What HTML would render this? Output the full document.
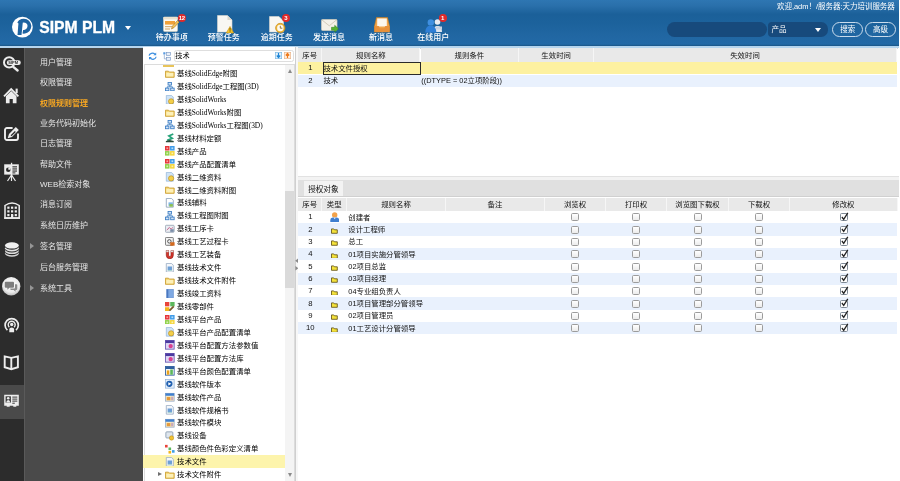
<!DOCTYPE html>
<html lang="zh-CN"><head><meta charset="utf-8"><title>SIPM PLM</title>
<style>
*{box-sizing:border-box;margin:0;padding:0}
html,body{width:900px;height:481px;overflow:hidden;background:#fff}
body{position:relative;font-family:"Liberation Sans","Noto Sans CJK SC",sans-serif;font-size:8px;color:#222;line-height:1}
.abs{position:absolute}
#hdr{left:0;top:0;width:898.600px;height:46.300px;background:linear-gradient(#2e76b2 0,#2a70ab 12%,#1b6099 31%,#1c629c 50%,#2167a3 80%,#2269a6 96%,#1a5585 100%)}
#hdrline{left:0;top:46.300px;width:898.600px;height:1.300px;background:#b5d5ee}
#logo{left:11px;top:16px;width:23px;height:23px}
#title{left:39.300px;top:19.600px;font-size:15.700px;font-weight:bold;color:#fff;-webkit-text-stroke:0.350px #fff;white-space:nowrap;transform-origin:0 0}
#caret{left:124.800px;top:25.800px;width:0;height:0;border-left:3.5px solid transparent;border-right:3.5px solid transparent;border-top:4px solid #fff}
.tb{position:absolute;top:33.5px;width:60px;margin-left:-30px;text-align:center;color:#fff;font-size:8px;font-weight:500;white-space:nowrap}
.tbi{position:absolute;top:13px;width:18px;height:18px;margin-left:-9px}
.badge{position:absolute;top:13.5px;width:8px;height:8px;border-radius:4px;background:#e02a2a;color:#fff;font-size:6px;line-height:8px;text-align:center;font-weight:bold;letter-spacing:-0.3px}
#welcome{right:5.200px;top:3.200px;color:#fff;font-size:7.480px;white-space:nowrap}
#search{left:666.700px;top:22.200px;width:100px;height:15.300px;border-radius:7.600px;background:#174a7c}
#sel{left:768px;top:22.200px;width:59.500px;height:15.300px;border-radius:4px 7px 7px 4px;background:#174a7c;color:#fff;font-size:7.600px;line-height:15.300px;padding-left:3.500px}
#selarrow{left:815.400px;top:27.600px;width:0;height:0;border-left:3.5px solid transparent;border-right:3.5px solid transparent;border-top:4px solid #fff}
.btn{position:absolute;top:22.200px;height:15.300px;border:0.800px solid #c9dbec;border-radius:7.600px;color:#fff;font-size:7.500px;line-height:13.700px;text-align:center}
#iconbar{left:0;top:47.600px;width:23.800px;height:434px;background:#2c2c2c}
#menu{left:23.800px;top:47.600px;width:119.400px;height:434px;background:#4a4a4a;border-left:1px solid #5a5a5a}
.mi{position:absolute;left:40px;color:#e6e6e6;font-size:8px;white-space:nowrap}
.mi.act{color:#f5a623;font-weight:bold}
.marr{position:absolute;left:29.800px;width:0;height:0;border-top:3px solid transparent;border-bottom:3px solid transparent;border-left:4.600px solid #969696}
.sb{position:absolute;left:2px;width:20px;height:20px}
#tree{left:143px;top:47px;width:152px;height:434px;background:#fff;overflow:hidden}
.tr{position:absolute;left:0;width:142.400px;height:13px;font-family:"Liberation Serif","Noto Sans CJK SC",serif;font-size:7.400px;line-height:13px;color:#000;white-space:nowrap}
.tr .ti{position:absolute;left:22.100px;top:1.900px}
.tr span{position:absolute;left:34px;top:0.300px}
.tr.sel{background:#fdf4ac}
#split{left:294.500px;top:47px;width:3px;height:434px;background:#f7f7f7;border-left:1px solid #cfcfcf}
.gh{position:absolute;height:13px;background:#e9e9e9;border-right:1px solid #f6f6f6;text-align:center;line-height:13px;font-size:7.400px;color:#111}
.gc{position:absolute;font-size:7.400px;white-space:nowrap;color:#111}
.gn{position:absolute;width:20.600px;text-align:center;font-size:7.700px;color:#111;white-space:nowrap}
.cb{position:absolute;width:8px;height:8px;border:0.900px solid #9c9c9c;border-radius:1.600px;background:linear-gradient(#fff,#ececec)}
#wrap{position:absolute;left:0;top:0;width:900px;height:481px;overflow:hidden;will-change:transform}
</style></head><body><div id="wrap">

<div id="hdr" class="abs"></div><div id="hdrline" class="abs"></div>
<svg id="logo" class="abs" viewBox="11 16 23 23"><circle cx="22.400" cy="27.100" r="10.400" fill="#fff"/><path d="M18.900 23.450a5.600 5.600 0 1 1 3.900 8.300" fill="none" stroke="#1f64a1" stroke-width="3.800"/><path d="M18.500 22.300h4.300l-1.300 12.800h-4z" fill="#1f64a1"/></svg>
<div id="title" class="abs">SIPM PLM</div><div id="caret" class="abs"></div>
<svg class="abs" style="left:163px;top:16px" width="16" height="16" viewBox="0 0 16 16"><rect x="0.5" y="1" width="14" height="14.5" rx="1" fill="#fcfaf3" stroke="#d8d2c0" stroke-width=".6"/><rect x="0.5" y="1" width="14" height="2.4" fill="#e9e2cf"/><rect x="2" y="5" width="10" height="3.6" fill="#f0a23a"/><rect x="2" y="10" width="7" height="1.2" fill="#d8b27a"/><rect x="2" y="12.4" width="5" height="1.2" fill="#d8b27a"/><path d="M8.5 13l1-3 5-5.5 1.6 1.6-5 5.4z" fill="#f6c55a" stroke="#a8741c" stroke-width=".6"/></svg>
<div class="tb" style="left:171.7px">待办事项</div>
<div class="badge" style="left:177.7px">12</div>
<svg class="abs" style="left:217px;top:14.5px" width="18" height="19" viewBox="0 0 18 19"><path d="M0.5 0.5h10l4.5 4.5v12h-14.5z" fill="#f8f7f3" stroke="#dcd9d0" stroke-width=".6"/><path d="M10.5 0.5v4.5h4.5z" fill="#dcd8cd"/><path d="M13 11.500l3.700 6.500h-7.400z" fill="#f6c62c" stroke="#c9951a" stroke-width=".7"/><rect x="12.600" y="13" width=".9" height="2.800" fill="#6b4e00"/><rect x="12.600" y="16.300" width=".9" height=".9" fill="#6b4e00"/></svg>
<div class="tb" style="left:223.7px">预警任务</div>
<svg class="abs" style="left:269px;top:15.5px" width="18" height="18" viewBox="0 0 18 18"><path d="M0.500 0.500h9.500l4.500 4.500v11h-14z" fill="#f8f7f3" stroke="#dcd9d0" stroke-width=".6"/><circle cx="11.300" cy="12" r="4.700" fill="#f1b93a" stroke="#c58a1a" stroke-width=".7"/><circle cx="11.300" cy="12" r="3.200" fill="#fdfaf0"/><path d="M11.300 9.800v2.400h2" stroke="#7a5a1a" stroke-width=".8" fill="none"/></svg>
<div class="tb" style="left:276.7px">逾期任务</div>
<div class="badge" style="left:281.8px">3</div>
<svg class="abs" style="left:320.500px;top:18.500px" width="18" height="14" viewBox="0 0 18 14"><rect x="0.500" y="0.500" width="15.500" height="11" rx="1" fill="#f4f1e8" stroke="#d3cdbd" stroke-width=".7"/><path d="M0.800 0.800l7.450 6 7.450-6" fill="none" stroke="#c9c2ae" stroke-width=".8"/><path d="M10.500 8.300h3.200v-2l3.800 3.500-3.800 3.500v-2h-3.200z" fill="#55b332" stroke="#2f7d1c" stroke-width=".5"/></svg>
<div class="tb" style="left:329px">发送消息</div>
<svg class="abs" style="left:373.500px;top:16.500px" width="16" height="16" viewBox="0 0 16 16"><path d="M2.500 0.500h11l2 8.500v6h-15v-6z" fill="#f1a54a" stroke="#c77d22" stroke-width=".6"/><rect x="3.200" y="1.500" width="9.600" height="8" fill="#fbf7ee"/><path d="M0.500 9h4.200l1 2.200h4.600l1-2.200h4.200v6h-15z" fill="#e8913a"/></svg>
<div class="tb" style="left:381px">新消息</div>
<svg class="abs" style="left:425px;top:17.500px" width="18" height="15" viewBox="0 0 18 15"><circle cx="12.500" cy="4" r="2.800" fill="#e9ecf2"/><path d="M8 14c0-4.500 2-6 4.500-6s4.500 1.500 4.500 6z" fill="#dfe5ee"/><rect x="11" y="8.500" width="6" height="3" fill="#c9d3e2"/><circle cx="5.800" cy="4.400" r="3.200" fill="#3f8fe0"/><path d="M0.300 14.500c0-5 2.300-6.800 5.500-6.800s5.500 1.800 5.500 6.800z" fill="#2f7fd6"/></svg>
<div class="tb" style="left:433.2px">在线用户</div>
<div class="badge" style="left:438.5px">1</div>
<div id="welcome" class="abs">欢迎,adm！/服务器:天力培训服务器</div>
<div id="search" class="abs"></div><div id="sel" class="abs">产品</div><div id="selarrow" class="abs"></div>
<div class="btn" style="left:832px;width:31.300px">搜索</div><div class="btn" style="left:865.300px;width:30.500px">高级</div>
<div id="iconbar" class="abs"></div><div id="menu" class="abs"></div>
<div class="mi" style="top:59.0px">用户管理</div>
<div class="mi" style="top:79.1px">权限管理</div>
<div class="mi act" style="top:99.7px">权限规则管理</div>
<div class="mi" style="top:119.8px">业务代码初始化</div>
<div class="mi" style="top:140.2px">日志管理</div>
<div class="mi" style="top:160.6px">帮助文件</div>
<div class="mi" style="top:181.0px">WEB检索对象</div>
<div class="mi" style="top:201.3px">消息订阅</div>
<div class="mi" style="top:222.3px">系统日历维护</div>
<div class="mi" style="top:243.1px">签名管理</div>
<div class="marr" style="top:243.2px"></div>
<div class="mi" style="top:263.6px">后台服务管理</div>
<div class="mi" style="top:284.8px">系统工具</div>
<div class="marr" style="top:284.9px"></div>
<svg class="abs" style="left:2px;top:55px" width="22" height="18" viewBox="2 55 22 18"><circle cx="9.2" cy="62.4" r="5.2" fill="none" stroke="#ededed" stroke-width="2"/><path d="M13.3 66.8l4.300 3.700" stroke="#ededed" stroke-width="2.400" stroke-linecap="round"/><rect x="6.800" y="60.300" width="14" height="4.700" rx="2.350" fill="#ededed"/><text x="8.300" y="64.200" font-family="Liberation Sans,sans-serif" font-size="4" font-weight="bold" fill="#2c2c2c">SIPM</text></svg>
<svg class="abs" style="left:3px;top:87px" width="17" height="17" viewBox="3 87 17 17"><path d="M4 96.300l7.200-7.300 7.200 7.300" fill="none" stroke="#ededed" stroke-width="1.800" stroke-linejoin="miter"/><path d="M5.900 96.200l5.300-5.300 5.300 5.300v7h-3.700v-4.200h-3.200v4.200h-3.700z" fill="#ededed"/><rect x="15.600" y="88.600" width="2.100" height="4.500" fill="#ededed"/></svg>
<svg class="abs" style="left:3px;top:125px" width="18" height="18" viewBox="3 125 18 18"><path d="M12.600 128h-5.700a1.900 1.900 0 0 0-1.900 1.900v8.200a1.900 1.900 0 0 0 1.900 1.900h9.200a1.900 1.900 0 0 0 1.900-1.900v-4.600" fill="none" stroke="#ededed" stroke-width="1.900"/><path d="M7.700 138.200l1.300-4.300 6.800-6.800 3 3-6.800 6.800z" fill="#ededed"/><path d="M10.600 135.300l4.300-4.300.9.900-4.300 4.300z" fill="#2c2c2c"/></svg>
<svg class="abs" style="left:3px;top:162px" width="18" height="20" viewBox="3 162 18 20"><rect x="10.900" y="162.800" width="1.300" height="14" fill="#ededed"/><rect x="4.200" y="164.300" width="14.600" height="10.300" fill="#ededed"/><path d="M11.500 175l-4 6M11.500 175l4 6M11.500 175v6" stroke="#ededed" stroke-width="1.200"/><circle cx="8.300" cy="169.700" r="2.300" fill="#2c2c2c"/><path d="M8.300 169.700v-2.300a2.300 2.300 0 0 1 2.300 2.300z" fill="#ededed"/><rect x="12.400" y="166.300" width="4.600" height="1.100" fill="#2c2c2c"/><rect x="12.400" y="168.400" width="4.600" height="1.100" fill="#2c2c2c"/><rect x="12.400" y="170.500" width="4.600" height="1.100" fill="#2c2c2c"/><rect x="12.400" y="172.400" width="3" height="1" fill="#2c2c2c"/></svg>
<svg class="abs" style="left:3px;top:201px" width="19" height="19" viewBox="3 201 19 19"><path d="M5 218v-12.500q7-5.200 14.200 0v12.500z" fill="none" stroke="#ededed" stroke-width="1.500"/><rect x="4.200" y="217.300" width="15.800" height="1.600" fill="#ededed"/><rect x="7.3" y="206.6" width="2.200" height="2.200" fill="#ededed"/><rect x="11.0" y="206.6" width="2.200" height="2.200" fill="#ededed"/><rect x="14.7" y="206.6" width="2.200" height="2.200" fill="#ededed"/><rect x="7.3" y="210.3" width="2.200" height="2.200" fill="#ededed"/><rect x="11.0" y="210.3" width="2.200" height="2.200" fill="#ededed"/><rect x="14.7" y="210.3" width="2.200" height="2.200" fill="#ededed"/><rect x="7.3" y="214.0" width="2.200" height="2.200" fill="#ededed"/><rect x="11.0" y="214.0" width="2.200" height="2.200" fill="#ededed"/><rect x="14.7" y="214.0" width="2.200" height="2.200" fill="#ededed"/><rect x="11" y="215" width="2.200" height="3" fill="#ededed"/></svg>
<svg class="abs" style="left:4px;top:241px" width="16" height="17" viewBox="4 241 16 17"><ellipse cx="11.900" cy="253.600" rx="6.900" ry="3.200" fill="#d8d8d8"/><ellipse cx="11.900" cy="252" rx="6.900" ry="3.200" fill="#2c2c2c"/><ellipse cx="11.900" cy="250.900" rx="6.900" ry="3.200" fill="#dcdcdc"/><ellipse cx="11.900" cy="249.300" rx="6.900" ry="3.200" fill="#2c2c2c"/><ellipse cx="11.900" cy="248.200" rx="6.900" ry="3.200" fill="#e2e2e2"/><ellipse cx="11.900" cy="246.600" rx="6.900" ry="3.200" fill="#2c2c2c"/><ellipse cx="11.900" cy="245.400" rx="6.900" ry="3.200" fill="#f0f0f0"/></svg>
<svg class="abs" style="left:1px;top:276px" width="21" height="21" viewBox="1 276 21 21"><defs><radialGradient id="cg" cx="50%" cy="40%" r="60%"><stop offset="0" stop-color="#fff"/><stop offset=".7" stop-color="#ececec"/><stop offset="1" stop-color="#bdbdbd"/></radialGradient></defs><circle cx="11.200" cy="286.300" r="9.200" fill="url(#cg)"/><path d="M5.800 281.800h7.200a1 1 0 0 1 1 1v4a1 1 0 0 1-1 1h-3.600l-2 2v-2h-1.600a1 1 0 0 1-1-1v-4a1 1 0 0 1 1-1z" fill="#7d7d7d"/><path d="M15 284.300h1.500a.8.800 0 0 1 .8.800v4a.8.800 0 0 1-.8.800h-.9v1.900l-2-1.900h-2.600a.8.800 0 0 1-.8-.8v-.5h3.600a1.200 1.200 0 0 0 1.200-1.200z" fill="#8a8a8a"/></svg>
<svg class="abs" style="left:3px;top:316px" width="18" height="18" viewBox="3 316 18 18"><path d="M7.400 330.200a6.600 6.600 0 1 1 8.600 0" fill="none" stroke="#ededed" stroke-width="1.700"/><path d="M9.300 327.300a3.500 3.500 0 1 1 4.800 0" fill="none" stroke="#ededed" stroke-width="1.400"/><circle cx="11.700" cy="324.500" r="1.700" fill="#ededed"/><path d="M9.300 332.300v-3.200q0-1.500 2.400-1.500t2.400 1.500v3.200z" fill="#ededed"/></svg>
<svg class="abs" style="left:3px;top:354px" width="17" height="18" viewBox="3 354 17 18"><path d="M4.700 356.400l6.600 1.500 6.600-1.500v10.800l-6.600 2-6.600-2z" fill="none" stroke="#ededed" stroke-width="1.900" stroke-linejoin="miter"/><path d="M11.300 357.800v11.600" stroke="#ededed" stroke-width="1.900"/></svg>
<div class="abs" style="left:0;top:385px;width:24px;height:34px;background:#4a4a4a"></div><svg class="abs" style="left:3px;top:393px" width="17" height="15" viewBox="3 393 17 15"><path d="M4.200 394.700h14.600v11h-2.500v1h-3v-1h-3.600v1h-3v-1h-2.500z" fill="#ededed"/><rect x="5.600" y="396.300" width="5.300" height="6.300" fill="#3a3a3a"/><circle cx="8.250" cy="398.300" r="1.300" fill="#ededed"/><path d="M6.300 402.600q0-2.600 1.950-2.600t1.950 2.600z" fill="#ededed"/><rect x="12.300" y="396.600" width="5" height="1" fill="#3a3a3a"/><rect x="12.300" y="398.600" width="5" height="1" fill="#3a3a3a"/><rect x="12.300" y="400.600" width="5" height="1" fill="#3a3a3a"/><rect x="12.300" y="402.700" width="2.500" height="1" fill="#3a3a3a"/></svg>
<div id="tree" class="abs">
<svg class="abs" style="left:4.600px;top:4.800px" width="9.200" height="8.400" viewBox="0 0 11 10"><path d="M1.300 4.300a4 3.300 0 0 1 7-1.800" fill="none" stroke="#3d8fe0" stroke-width="1.500"/><path d="M9.800 0.600v3.400h-3.400z" fill="#3d8fe0"/><path d="M9.700 5.700a4 3.300 0 0 1-7 1.800" fill="none" stroke="#3d8fe0" stroke-width="1.500"/><path d="M1.200 9.400v-3.400h3.400z" fill="#3d8fe0"/></svg>
<svg class="abs" style="left:19.600px;top:4.600px" width="8.400" height="9.200" viewBox="0 0 10 11"><rect x="0.300" y="0.300" width="2.600" height="2.600" fill="#5a9be0"/><rect x="4.200" y="0.800" width="4.800" height="3.200" fill="#e8eef7" stroke="#6d8fc0" stroke-width=".7"/><rect x="4.200" y="6.300" width="4.800" height="3.600" fill="#e8eef7" stroke="#6d8fc0" stroke-width=".7"/><path d="M1.600 3v5.200h2.600M1.600 5h0" stroke="#6d8fc0" stroke-width=".7" fill="none"/></svg>
<div class="abs" style="left:30.500px;top:3.200px;width:120px;height:11.600px;border:1px solid #dedede;border-radius:2.500px;background:#fff"></div>
<div class="abs" style="left:32.200px;top:5.600px;font-family:'Liberation Serif','Noto Sans CJK SC',serif;font-size:7.200px;color:#000">技术</div>
<svg class="abs" style="left:132.400px;top:5.300px" width="7" height="7" viewBox="0 0 7 7"><rect x="0.350" y="0.350" width="6.300" height="6.300" fill="#e4f1fb" stroke="#7db9e6" stroke-width=".7"/><path d="M3.500 1v4M1.800 3.500l1.700 2 1.700-2" stroke="#1f86d6" stroke-width="1.200" fill="none"/></svg>
<svg class="abs" style="left:141.300px;top:5.300px" width="7" height="7" viewBox="0 0 7 7"><rect x="0.350" y="0.350" width="6.300" height="6.300" fill="#fdeee0" stroke="#eab58a" stroke-width=".7"/><path d="M3.500 6v-4M1.800 3.500l1.700-2 1.700 2" stroke="#ee7a1c" stroke-width="1.200" fill="none"/></svg>
<div class="abs" style="left:1px;top:17px;width:150.500px;height:420px;border:1px solid #dcdcdc;border-bottom:none"></div>
<div class="abs" style="left:20px;top:18px;width:11px;height:1.500px;background:#e8c45a"></div>
<div class="tr" style="top:19.80px"><svg class="ti" width="9.600" height="9.600" viewBox="0 0 11 11"><path d="M0.5 2.5h3.5l1 1h5.5v6h-10z" fill="#f6d777" stroke="#c99a2a" stroke-width="1"/><rect x="1.5" y="4.5" width="8" height="4" fill="#fdf0b8"/></svg><span>基线SolidEdge附图</span></div>
<div class="tr" style="top:32.74px"><svg class="ti" width="9.600" height="9.600" viewBox="0 0 11 11"><rect x="3.5" y="0.5" width="4" height="3" fill="#cfe3f8" stroke="#3f7fc4"/><rect x="0.5" y="7" width="4" height="3" fill="#cfe3f8" stroke="#3f7fc4"/><rect x="6.5" y="7" width="4" height="3" fill="#cfe3f8" stroke="#3f7fc4"/><path d="M5.5 3.5v2M2.5 7v-1.5h6V7" stroke="#3f7fc4" fill="none"/></svg><span>基线SolidEdge工程图(3D)</span></div>
<div class="tr" style="top:45.68px"><svg class="ti" width="9.600" height="9.600" viewBox="0 0 11 11"><path d="M1.500 0.500h6l2 2v8h-8z" fill="#cfe3f6" stroke="#8fb2d8" stroke-width=".8"/><circle cx="7" cy="7.300" r="3" fill="#f3cf4a" stroke="#b7891b" stroke-width=".7"/></svg><span>基线SolidWorks</span></div>
<div class="tr" style="top:58.62px"><svg class="ti" width="9.600" height="9.600" viewBox="0 0 11 11"><path d="M0.5 2.5h3.5l1 1h5.5v6h-10z" fill="#f6d777" stroke="#c99a2a" stroke-width="1"/><rect x="1.5" y="4.5" width="8" height="4" fill="#fdf0b8"/></svg><span>基线SolidWorks附图</span></div>
<div class="tr" style="top:71.56px"><svg class="ti" width="9.600" height="9.600" viewBox="0 0 11 11"><rect x="3.5" y="0.5" width="4" height="3" fill="#cfe3f8" stroke="#3f7fc4"/><rect x="0.5" y="7" width="4" height="3" fill="#cfe3f8" stroke="#3f7fc4"/><rect x="6.5" y="7" width="4" height="3" fill="#cfe3f8" stroke="#3f7fc4"/><path d="M5.5 3.5v2M2.5 7v-1.5h6V7" stroke="#3f7fc4" fill="none"/></svg><span>基线SolidWorks工程图(3D)</span></div>
<div class="tr" style="top:84.50px"><svg class="ti" width="9.600" height="9.600" viewBox="0 0 11 11"><path d="M9.500 1.200l-5 2.200 3.800 2.600-5.800 2.500" stroke="#27a37a" stroke-width="2" fill="none"/><path d="M1 9.300l4.500-1.200 4.500 1.200v1.200h-9z" fill="#2b4a3a"/></svg><span>基线材料定额</span></div>
<div class="tr" style="top:97.44px"><svg class="ti" width="9.600" height="9.600" viewBox="0 0 11 11"><rect x="0" y="0" width="5.200" height="5.200" fill="#e5353a"/><rect x="5.800" y="0" width="5.200" height="5.200" fill="#3f9be8"/><rect x="0" y="5.800" width="5.200" height="5.200" fill="#8fd14a"/><rect x="5.800" y="5.800" width="5.200" height="5.200" fill="#f5d63a"/><rect x="1.600" y="1.600" width="2" height="2" fill="#f7a0a0"/><rect x="7.400" y="1.600" width="2" height="2" fill="#b5dcf8"/><rect x="1.600" y="7.400" width="2" height="2" fill="#d5efb0"/><rect x="7.400" y="7.400" width="2" height="2" fill="#fbf0b0"/></svg><span>基线产品</span></div>
<div class="tr" style="top:110.38px"><svg class="ti" width="9.600" height="9.600" viewBox="0 0 11 11"><rect x="0" y="0" width="5.200" height="5.200" fill="#e5353a"/><rect x="5.800" y="0" width="5.200" height="5.200" fill="#3f9be8"/><rect x="0" y="5.800" width="5.200" height="5.200" fill="#8fd14a"/><rect x="5.800" y="5.800" width="5.200" height="5.200" fill="#f5d63a"/><rect x="1.600" y="1.600" width="2" height="2" fill="#f7a0a0"/><rect x="7.400" y="1.600" width="2" height="2" fill="#b5dcf8"/><rect x="1.600" y="7.400" width="2" height="2" fill="#d5efb0"/><rect x="7.400" y="7.400" width="2" height="2" fill="#fbf0b0"/></svg><span>基线产品配置清单</span></div>
<div class="tr" style="top:123.32px"><svg class="ti" width="9.600" height="9.600" viewBox="0 0 11 11"><path d="M1.500 0.500h6l2 2v8h-8z" fill="#cfe3f6" stroke="#8fb2d8" stroke-width=".8"/><circle cx="7" cy="7.300" r="3" fill="#f3cf4a" stroke="#b7891b" stroke-width=".7"/></svg><span>基线二维资料</span></div>
<div class="tr" style="top:136.26px"><svg class="ti" width="9.600" height="9.600" viewBox="0 0 11 11"><path d="M0.5 2.5h3.5l1 1h5.5v6h-10z" fill="#f6d777" stroke="#c99a2a" stroke-width="1"/><rect x="1.5" y="4.5" width="8" height="4" fill="#fdf0b8"/></svg><span>基线二维资料附图</span></div>
<div class="tr" style="top:149.20px"><svg class="ti" width="9.600" height="9.600" viewBox="0 0 11 11"><path d="M1.5 0.5h6l2 2v8h-8z" fill="#fff" stroke="#8fa3bb"/><rect x="4" y="5" width="5" height="4" fill="#7fb6e8"/><rect x="5" y="7" width="4" height="3" fill="#8cc152"/></svg><span>基线辅料</span></div>
<div class="tr" style="top:162.14px"><svg class="ti" width="9.600" height="9.600" viewBox="0 0 11 11"><rect x="3.5" y="0.5" width="4" height="3" fill="#cfe3f8" stroke="#3f7fc4"/><rect x="0.5" y="7" width="4" height="3" fill="#cfe3f8" stroke="#3f7fc4"/><rect x="6.5" y="7" width="4" height="3" fill="#cfe3f8" stroke="#3f7fc4"/><path d="M5.5 3.5v2M2.5 7v-1.5h6V7" stroke="#3f7fc4" fill="none"/></svg><span>基线工程图附图</span></div>
<div class="tr" style="top:175.08px"><svg class="ti" width="9.600" height="9.600" viewBox="0 0 11 11"><rect x="0.5" y="1.5" width="10" height="8" rx="1" fill="#e9edf2" stroke="#9aa7b5"/><path d="M2 7l3-3 2 2 2-2" stroke="#c24d7a" fill="none"/><rect x="6" y="6" width="4" height="3" fill="#7a8ea8"/></svg><span>基线工序卡</span></div>
<div class="tr" style="top:188.02px"><svg class="ti" width="9.600" height="9.600" viewBox="0 0 11 11"><rect x="0.5" y="0.5" width="9" height="9" rx="1" fill="#f2f2f2" stroke="#666"/><circle cx="5" cy="5" r="2" fill="none" stroke="#444"/><rect x="6" y="6" width="5" height="4" fill="#d46a1f"/></svg><span>基线工艺过程卡</span></div>
<div class="tr" style="top:200.96px"><svg class="ti" width="9.600" height="9.600" viewBox="0 0 11 11"><path d="M1.5 0.5v5.5a4 4 0 0 0 8 0V0.5h-2.6v5.5a1.4 1.4 0 0 1-2.8 0V0.5z" fill="#d8352b" stroke="#8f1d16" stroke-width=".8"/><rect x="1.5" y="0.5" width="2.6" height="2" fill="#ddd"/><rect x="6.9" y="0.5" width="2.6" height="2" fill="#ddd"/></svg><span>基线工艺装备</span></div>
<div class="tr" style="top:213.90px"><svg class="ti" width="9.600" height="9.600" viewBox="0 0 11 11"><path d="M1.5 0.5h6l2 2v8h-8z" fill="#f4f7fb" stroke="#9fb0c6"/><rect x="3" y="4" width="5" height="4" fill="#6d9fd6"/><rect x="3" y="8" width="5" height="1" fill="#9cc"/></svg><span>基线技术文件</span></div>
<div class="tr" style="top:226.84px"><svg class="ti" width="9.600" height="9.600" viewBox="0 0 11 11"><path d="M0.5 2.5h3.5l1 1h5.5v6h-10z" fill="#f6d777" stroke="#c99a2a" stroke-width="1"/><rect x="1.5" y="4.5" width="8" height="4" fill="#fdf0b8"/></svg><span>基线技术文件附件</span></div>
<div class="tr" style="top:239.78px"><svg class="ti" width="9.600" height="9.600" viewBox="0 0 11 11"><rect x="2" y="0.500" width="7.500" height="10" fill="#7fa9e3" stroke="#5a86c8" stroke-width=".7"/><rect x="2" y="0.500" width="1.800" height="10" fill="#4a78c0"/></svg><span>基线竣工资料</span></div>
<div class="tr" style="top:252.72px"><svg class="ti" width="9.600" height="9.600" viewBox="0 0 11 11"><rect x="0" y="0" width="5" height="5" fill="#e8443a"/><rect x="6" y="0" width="5" height="5" fill="#5cb85c"/><rect x="0" y="6" width="5" height="5" fill="#f3b51c"/><path d="M5 10l5-5" stroke="#7a5a2a" stroke-width="2"/></svg><span>基线零部件</span></div>
<div class="tr" style="top:265.66px"><svg class="ti" width="9.600" height="9.600" viewBox="0 0 11 11"><rect x="0" y="0" width="5.200" height="5.200" fill="#e5353a"/><rect x="5.800" y="0" width="5.200" height="5.200" fill="#3f9be8"/><rect x="0" y="5.800" width="5.200" height="5.200" fill="#8fd14a"/><rect x="5.800" y="5.800" width="5.200" height="5.200" fill="#f5d63a"/><rect x="1.600" y="1.600" width="2" height="2" fill="#f7a0a0"/><rect x="7.400" y="1.600" width="2" height="2" fill="#b5dcf8"/><rect x="1.600" y="7.400" width="2" height="2" fill="#d5efb0"/><rect x="7.400" y="7.400" width="2" height="2" fill="#fbf0b0"/></svg><span>基线平台产品</span></div>
<div class="tr" style="top:278.60px"><svg class="ti" width="9.600" height="9.600" viewBox="0 0 11 11"><path d="M1.500 0.500h6l2 2v8h-8z" fill="#cfe3f6" stroke="#8fb2d8" stroke-width=".8"/><circle cx="7" cy="7.300" r="3" fill="#f3cf4a" stroke="#b7891b" stroke-width=".7"/></svg><span>基线平台产品配置清单</span></div>
<div class="tr" style="top:291.54px"><svg class="ti" width="9.600" height="9.600" viewBox="0 0 11 11"><rect x="0.500" y="0.500" width="10" height="10" fill="#ddd6f3" stroke="#6a58b5"/><rect x="0.500" y="0.500" width="10" height="3" fill="#4a3aa0"/><circle cx="6.500" cy="7" r="2.500" fill="#d9408f"/></svg><span>基线平台配置方法参数值</span></div>
<div class="tr" style="top:304.48px"><svg class="ti" width="9.600" height="9.600" viewBox="0 0 11 11"><rect x="0.500" y="0.500" width="10" height="10" fill="#ddd6f3" stroke="#6a58b5"/><rect x="0.500" y="0.500" width="10" height="3" fill="#4a3aa0"/><circle cx="6.500" cy="7" r="2.500" fill="#d9408f"/></svg><span>基线平台配置方法库</span></div>
<div class="tr" style="top:317.42px"><svg class="ti" width="9.600" height="9.600" viewBox="0 0 11 11"><rect x="0.5" y="0.5" width="10" height="10" fill="#fff" stroke="#2f5f9f"/><rect x="0.5" y="0.5" width="10" height="3" fill="#2f5f9f"/><rect x="2" y="5" width="3" height="5" fill="#e8a21c"/><rect x="6" y="4" width="3" height="6" fill="#5cb85c"/></svg><span>基线平台颜色配置清单</span></div>
<div class="tr" style="top:330.36px"><svg class="ti" width="9.600" height="9.600" viewBox="0 0 11 11"><rect x="0.500" y="0.500" width="10" height="10" fill="#e3eefa" stroke="#8fb0d8" stroke-width=".8"/><circle cx="5" cy="5.500" r="3.600" fill="#1f5fb0"/><path d="M3.800 3.600l3.400 1.900-3.400 1.900z" fill="#fff"/></svg><span>基线软件版本</span></div>
<div class="tr" style="top:343.30px"><svg class="ti" width="9.600" height="9.600" viewBox="0 0 11 11"><rect x="0.500" y="1.500" width="10" height="9" fill="#f3e7c4" stroke="#8aa3c4" stroke-width=".8"/><rect x="0.500" y="1.500" width="10" height="2.800" fill="#3f7fd0"/><rect x="2" y="5.800" width="4.200" height="3.600" fill="#e59a3a"/><rect x="7" y="5.500" width="2.500" height="4" fill="#c9a8b8"/></svg><span>基线软件产品</span></div>
<div class="tr" style="top:356.24px"><svg class="ti" width="9.600" height="9.600" viewBox="0 0 11 11"><path d="M1.5 0.5h6l2 2v8h-8z" fill="#f4f7fb" stroke="#9fb0c6"/><rect x="3" y="4" width="5" height="4" fill="#6d9fd6"/><rect x="3" y="8" width="5" height="1" fill="#9cc"/></svg><span>基线软件规格书</span></div>
<div class="tr" style="top:369.18px"><svg class="ti" width="9.600" height="9.600" viewBox="0 0 11 11"><rect x="0.500" y="1.500" width="10" height="9" fill="#f3e7c4" stroke="#8aa3c4" stroke-width=".8"/><rect x="0.500" y="1.500" width="10" height="2.800" fill="#3f7fd0"/><rect x="2" y="5.800" width="4.200" height="3.600" fill="#e59a3a"/><rect x="7" y="5.500" width="2.500" height="4" fill="#c9a8b8"/></svg><span>基线软件模块</span></div>
<div class="tr" style="top:382.12px"><svg class="ti" width="9.600" height="9.600" viewBox="0 0 11 11"><rect x="1" y="1" width="8" height="7" rx="1" fill="#dfe6ee" stroke="#8a9bb0"/><circle cx="7.5" cy="8" r="2.5" fill="#f1c232" stroke="#b7891b" stroke-width=".6"/></svg><span>基线设备</span></div>
<div class="tr" style="top:395.06px"><svg class="ti" width="9.600" height="9.600" viewBox="0 0 11 11"><rect x="0" y="1" width="3" height="3" fill="#e8443a"/><rect x="4" y="4" width="3" height="3" fill="#5cb85c"/><rect x="8" y="7" width="3" height="3" fill="#3fa0e6"/><rect x="4" y="8" width="3" height="3" fill="#f3b51c"/></svg><span>基线颜色件色彩定义清单</span></div>
<div class="tr sel" style="top:408.00px"><svg class="ti" width="9.600" height="9.600" viewBox="0 0 11 11"><path d="M1.5 0.5h6l2 2v8h-8z" fill="#f4f7fb" stroke="#9fb0c6"/><rect x="3" y="4" width="5" height="4" fill="#6d9fd6"/><rect x="3" y="8" width="5" height="1" fill="#9cc"/></svg><span>技术文件</span></div>
<div class="tr" style="top:420.94px"><svg class="ti" width="9.600" height="9.600" viewBox="0 0 11 11"><path d="M0.5 2.5h3.5l1 1h5.5v6h-10z" fill="#f6d777" stroke="#c99a2a" stroke-width="1"/><rect x="1.5" y="4.5" width="8" height="4" fill="#fdf0b8"/></svg><span>技术文件附件</span></div>
<div class="abs" style="left:14.600px;top:424.600px;width:0;height:0;border-top:2.900px solid transparent;border-bottom:2.900px solid transparent;border-left:4.500px solid #707070"></div>
<div class="abs" style="left:142.400px;top:18px;width:9px;height:416px;background:#f4f4f4"></div>
<div class="abs" style="left:142.400px;top:144px;width:9px;height:97px;background:#dadada"></div>
<div class="abs" style="left:144.500px;top:21.500px;width:0;height:0;border-left:2.300px solid transparent;border-right:2.300px solid transparent;border-bottom:4px solid #8a8a8a"></div>
<div class="abs" style="left:144.500px;top:426px;width:0;height:0;border-left:2.300px solid transparent;border-right:2.300px solid transparent;border-top:4px solid #8a8a8a"></div>
</div>
<div id="split" class="abs"></div>
<svg class="abs" style="left:294.800px;top:257.500px" width="3.400" height="13" viewBox="0 0 3.400 13"><path d="M3 0.500v4.500l-2.800-2.250z" fill="#8a8a8a"/><path d="M0.400 8v4.500l2.800-2.250z" fill="#8a8a8a"/></svg>
<div class="abs" style="left:297.500px;top:47.600px;width:600px;height:0.900px;background:#d4d4d4"></div>
<div class="gh" style="left:298px;top:48.300px;width:24.3px;height:13.400px;line-height:15.200px">序号</div>
<div class="gh" style="left:322.3px;top:48.300px;width:98.2px;height:13.400px;line-height:15.200px">规则名称</div>
<div class="gh" style="left:420.5px;top:48.300px;width:98.8px;height:13.400px;line-height:15.200px">规则条件</div>
<div class="gh" style="left:519.3px;top:48.300px;width:74.7px;height:13.400px;line-height:15.200px">生效时间</div>
<div class="gh" style="left:594px;top:48.300px;width:303.0px;height:13.400px;line-height:15.200px">失效时间</div>
<div class="abs" style="left:298px;top:62.200px;width:599px;height:12.300px;background:#fdf1a0"></div>
<div class="abs" style="left:298px;top:74.500px;width:599px;height:12.400px;background:#e9f1fd"></div>
<div class="abs" style="left:322.600px;top:61.900px;width:98.400px;height:12.900px;border:1px solid #2a2a2a;background:#fdf1a0"></div>
<div class="gn" style="left:300px;top:64.300px">1</div><div class="gn" style="left:300px;top:76.800px">2</div>
<div class="gc" style="left:323.400px;top:64.600px">技术文件授权</div><div class="gc" style="left:323.400px;top:77.300px">技术</div>
<div class="gc" style="left:421.300px;top:77.200px">((DTYPE = 02立项阶段))</div>
<div class="abs" style="left:297.500px;top:176px;width:601.300px;height:0.900px;background:#e2e2e2"></div>
<div class="abs" style="left:297.500px;top:176.900px;width:601.300px;height:2.700px;background:#f3f3f3"></div>
<div class="abs" style="left:297.500px;top:179.600px;width:601.300px;height:16px;background:#e0e0e0"></div>
<div class="abs" style="left:297.500px;top:195.600px;width:601.300px;height:1.900px;background:#f6f6f6;border-top:0.600px solid #d0d0d0"></div>
<div class="abs" style="left:304px;top:181px;width:38.700px;height:15.200px;background:#f3f3f3;text-align:center;line-height:17.400px;font-size:7.600px;color:#111">授权对象</div>
<div class="gh" style="left:298px;top:197.500px;width:24.3px;height:13.300px;line-height:14.200px">序号</div>
<div class="gh" style="left:322.3px;top:197.500px;width:24.7px;height:13.300px;line-height:14.200px">类型</div>
<div class="gh" style="left:347px;top:197.500px;width:99.0px;height:13.300px;line-height:14.200px">规则名称</div>
<div class="gh" style="left:446px;top:197.500px;width:99.0px;height:13.300px;line-height:14.200px">备注</div>
<div class="gh" style="left:545px;top:197.500px;width:61.0px;height:13.300px;line-height:14.200px">浏览权</div>
<div class="gh" style="left:606px;top:197.500px;width:61.0px;height:13.300px;line-height:14.200px">打印权</div>
<div class="gh" style="left:667px;top:197.500px;width:62.0px;height:13.300px;line-height:14.200px">浏览图下载权</div>
<div class="gh" style="left:729px;top:197.500px;width:61.0px;height:13.300px;line-height:14.200px">下载权</div>
<div class="gh" style="left:790px;top:197.500px;width:107.8px;height:13.300px;line-height:14.200px">修改权</div>
<div class="gn" style="left:300px;top:213.30px">1</div>
<div class="gc" style="left:348.300px;top:213.60px">创建者</div>
<svg class="abs" style="left:330px;top:211.80px" width="9.400" height="10.400" viewBox="0 0 9.400 10.400"><circle cx="4.700" cy="3" r="2.700" fill="#f2a24a"/><path d="M0.300 10.200v-2.200q0-2.500 2.400-2.500h4q2.400 0 2.400 2.500v2.200z" fill="#3f7fd0"/><path d="M3.500 5.500l1.200 1.800 1.200-1.800z" fill="#e8eef8"/></svg>
<div class="cb" style="left:571.0px;top:213.20px"></div>
<div class="cb" style="left:632.0px;top:213.20px"></div>
<div class="cb" style="left:694.0px;top:213.20px"></div>
<div class="cb" style="left:755.0px;top:213.20px"></div>
<div class="cb" style="left:840.0px;top:213.20px;background:#fff;border-color:#7f8a96"></div>
<svg class="abs" style="left:840.0px;top:211.80px" width="9" height="9" viewBox="0 0 9 9"><path d="M1.900 5l1.800 2.300L7.800 0.800" stroke="#222" stroke-width="1.300" fill="none"/></svg>
<div class="abs" style="left:298px;top:223.33px;width:599.300px;height:12.330px;background:#e9f1fd"></div>
<div class="gn" style="left:300px;top:225.63px">2</div>
<div class="gc" style="left:348.300px;top:225.93px">设计工程师</div>
<svg class="abs" style="left:331.200px;top:227.93px" width="6.800" height="5.800" viewBox="0 0 6.800 5.800"><path d="M0.500 0.900h2.200l.8.900h2.800v3.500h-5.800z" fill="#f4e23c" stroke="#5a4a10" stroke-width=".8"/></svg>
<div class="cb" style="left:571.0px;top:225.53px"></div>
<div class="cb" style="left:632.0px;top:225.53px"></div>
<div class="cb" style="left:694.0px;top:225.53px"></div>
<div class="cb" style="left:755.0px;top:225.53px"></div>
<div class="cb" style="left:840.0px;top:225.53px;background:#fff;border-color:#7f8a96"></div>
<svg class="abs" style="left:840.0px;top:224.13px" width="9" height="9" viewBox="0 0 9 9"><path d="M1.900 5l1.800 2.300L7.800 0.800" stroke="#222" stroke-width="1.300" fill="none"/></svg>
<div class="gn" style="left:300px;top:237.96px">3</div>
<div class="gc" style="left:348.300px;top:238.26px">总工</div>
<svg class="abs" style="left:331.200px;top:240.26px" width="6.800" height="5.800" viewBox="0 0 6.800 5.800"><path d="M0.500 0.900h2.200l.8.900h2.800v3.500h-5.800z" fill="#f4e23c" stroke="#5a4a10" stroke-width=".8"/></svg>
<div class="cb" style="left:571.0px;top:237.86px"></div>
<div class="cb" style="left:632.0px;top:237.86px"></div>
<div class="cb" style="left:694.0px;top:237.86px"></div>
<div class="cb" style="left:755.0px;top:237.86px"></div>
<div class="cb" style="left:840.0px;top:237.86px;background:#fff;border-color:#7f8a96"></div>
<svg class="abs" style="left:840.0px;top:236.46px" width="9" height="9" viewBox="0 0 9 9"><path d="M1.900 5l1.800 2.300L7.800 0.800" stroke="#222" stroke-width="1.300" fill="none"/></svg>
<div class="abs" style="left:298px;top:247.99px;width:599.300px;height:12.330px;background:#e9f1fd"></div>
<div class="gn" style="left:300px;top:250.29px">4</div>
<div class="gc" style="left:348.300px;top:250.59px">01项目实施分管领导</div>
<svg class="abs" style="left:331.200px;top:252.59px" width="6.800" height="5.800" viewBox="0 0 6.800 5.800"><path d="M0.500 0.900h2.200l.8.900h2.800v3.500h-5.800z" fill="#f4e23c" stroke="#5a4a10" stroke-width=".8"/></svg>
<div class="cb" style="left:571.0px;top:250.19px"></div>
<div class="cb" style="left:632.0px;top:250.19px"></div>
<div class="cb" style="left:694.0px;top:250.19px"></div>
<div class="cb" style="left:755.0px;top:250.19px"></div>
<div class="cb" style="left:840.0px;top:250.19px;background:#fff;border-color:#7f8a96"></div>
<svg class="abs" style="left:840.0px;top:248.79px" width="9" height="9" viewBox="0 0 9 9"><path d="M1.900 5l1.800 2.300L7.800 0.800" stroke="#222" stroke-width="1.300" fill="none"/></svg>
<div class="gn" style="left:300px;top:262.62px">5</div>
<div class="gc" style="left:348.300px;top:262.92px">02项目总监</div>
<svg class="abs" style="left:331.200px;top:264.92px" width="6.800" height="5.800" viewBox="0 0 6.800 5.800"><path d="M0.500 0.900h2.200l.8.900h2.800v3.500h-5.800z" fill="#f4e23c" stroke="#5a4a10" stroke-width=".8"/></svg>
<div class="cb" style="left:571.0px;top:262.52px"></div>
<div class="cb" style="left:632.0px;top:262.52px"></div>
<div class="cb" style="left:694.0px;top:262.52px"></div>
<div class="cb" style="left:755.0px;top:262.52px"></div>
<div class="cb" style="left:840.0px;top:262.52px;background:#fff;border-color:#7f8a96"></div>
<svg class="abs" style="left:840.0px;top:261.12px" width="9" height="9" viewBox="0 0 9 9"><path d="M1.900 5l1.800 2.300L7.800 0.800" stroke="#222" stroke-width="1.300" fill="none"/></svg>
<div class="abs" style="left:298px;top:272.65px;width:599.300px;height:12.330px;background:#e9f1fd"></div>
<div class="gn" style="left:300px;top:274.95px">6</div>
<div class="gc" style="left:348.300px;top:275.25px">03项目经理</div>
<svg class="abs" style="left:331.200px;top:277.25px" width="6.800" height="5.800" viewBox="0 0 6.800 5.800"><path d="M0.500 0.900h2.200l.8.900h2.800v3.500h-5.800z" fill="#f4e23c" stroke="#5a4a10" stroke-width=".8"/></svg>
<div class="cb" style="left:571.0px;top:274.85px"></div>
<div class="cb" style="left:632.0px;top:274.85px"></div>
<div class="cb" style="left:694.0px;top:274.85px"></div>
<div class="cb" style="left:755.0px;top:274.85px"></div>
<div class="cb" style="left:840.0px;top:274.85px;background:#fff;border-color:#7f8a96"></div>
<svg class="abs" style="left:840.0px;top:273.45px" width="9" height="9" viewBox="0 0 9 9"><path d="M1.900 5l1.800 2.300L7.800 0.800" stroke="#222" stroke-width="1.300" fill="none"/></svg>
<div class="gn" style="left:300px;top:287.28px">7</div>
<div class="gc" style="left:348.300px;top:287.58px">04专业组负责人</div>
<svg class="abs" style="left:331.200px;top:289.58px" width="6.800" height="5.800" viewBox="0 0 6.800 5.800"><path d="M0.500 0.900h2.200l.8.900h2.800v3.500h-5.800z" fill="#f4e23c" stroke="#5a4a10" stroke-width=".8"/></svg>
<div class="cb" style="left:571.0px;top:287.18px"></div>
<div class="cb" style="left:632.0px;top:287.18px"></div>
<div class="cb" style="left:694.0px;top:287.18px"></div>
<div class="cb" style="left:755.0px;top:287.18px"></div>
<div class="cb" style="left:840.0px;top:287.18px;background:#fff;border-color:#7f8a96"></div>
<svg class="abs" style="left:840.0px;top:285.78px" width="9" height="9" viewBox="0 0 9 9"><path d="M1.900 5l1.800 2.300L7.800 0.800" stroke="#222" stroke-width="1.300" fill="none"/></svg>
<div class="abs" style="left:298px;top:297.31px;width:599.300px;height:12.330px;background:#e9f1fd"></div>
<div class="gn" style="left:300px;top:299.61px">8</div>
<div class="gc" style="left:348.300px;top:299.91px">01项目管理部分管领导</div>
<svg class="abs" style="left:331.200px;top:301.91px" width="6.800" height="5.800" viewBox="0 0 6.800 5.800"><path d="M0.500 0.900h2.200l.8.900h2.800v3.500h-5.800z" fill="#f4e23c" stroke="#5a4a10" stroke-width=".8"/></svg>
<div class="cb" style="left:571.0px;top:299.51px"></div>
<div class="cb" style="left:632.0px;top:299.51px"></div>
<div class="cb" style="left:694.0px;top:299.51px"></div>
<div class="cb" style="left:755.0px;top:299.51px"></div>
<div class="cb" style="left:840.0px;top:299.51px;background:#fff;border-color:#7f8a96"></div>
<svg class="abs" style="left:840.0px;top:298.11px" width="9" height="9" viewBox="0 0 9 9"><path d="M1.900 5l1.800 2.300L7.800 0.800" stroke="#222" stroke-width="1.300" fill="none"/></svg>
<div class="gn" style="left:300px;top:311.94px">9</div>
<div class="gc" style="left:348.300px;top:312.24px">02项目管理员</div>
<svg class="abs" style="left:331.200px;top:314.24px" width="6.800" height="5.800" viewBox="0 0 6.800 5.800"><path d="M0.500 0.900h2.200l.8.900h2.800v3.500h-5.800z" fill="#f4e23c" stroke="#5a4a10" stroke-width=".8"/></svg>
<div class="cb" style="left:571.0px;top:311.84px"></div>
<div class="cb" style="left:632.0px;top:311.84px"></div>
<div class="cb" style="left:694.0px;top:311.84px"></div>
<div class="cb" style="left:755.0px;top:311.84px"></div>
<div class="cb" style="left:840.0px;top:311.84px;background:#fff;border-color:#7f8a96"></div>
<svg class="abs" style="left:840.0px;top:310.44px" width="9" height="9" viewBox="0 0 9 9"><path d="M1.900 5l1.800 2.300L7.800 0.800" stroke="#222" stroke-width="1.300" fill="none"/></svg>
<div class="abs" style="left:298px;top:321.97px;width:599.300px;height:12.330px;background:#e9f1fd"></div>
<div class="gn" style="left:300px;top:324.27px">10</div>
<div class="gc" style="left:348.300px;top:324.57px">01工艺设计分管领导</div>
<svg class="abs" style="left:331.200px;top:326.57px" width="6.800" height="5.800" viewBox="0 0 6.800 5.800"><path d="M0.500 0.900h2.200l.8.900h2.800v3.500h-5.800z" fill="#f4e23c" stroke="#5a4a10" stroke-width=".8"/></svg>
<div class="cb" style="left:571.0px;top:324.17px"></div>
<div class="cb" style="left:632.0px;top:324.17px"></div>
<div class="cb" style="left:694.0px;top:324.17px"></div>
<div class="cb" style="left:755.0px;top:324.17px"></div>
<div class="cb" style="left:840.0px;top:324.17px;background:#fff;border-color:#7f8a96"></div>
<svg class="abs" style="left:840.0px;top:322.77px" width="9" height="9" viewBox="0 0 9 9"><path d="M1.900 5l1.800 2.300L7.800 0.800" stroke="#222" stroke-width="1.300" fill="none"/></svg>
</div></body></html>
